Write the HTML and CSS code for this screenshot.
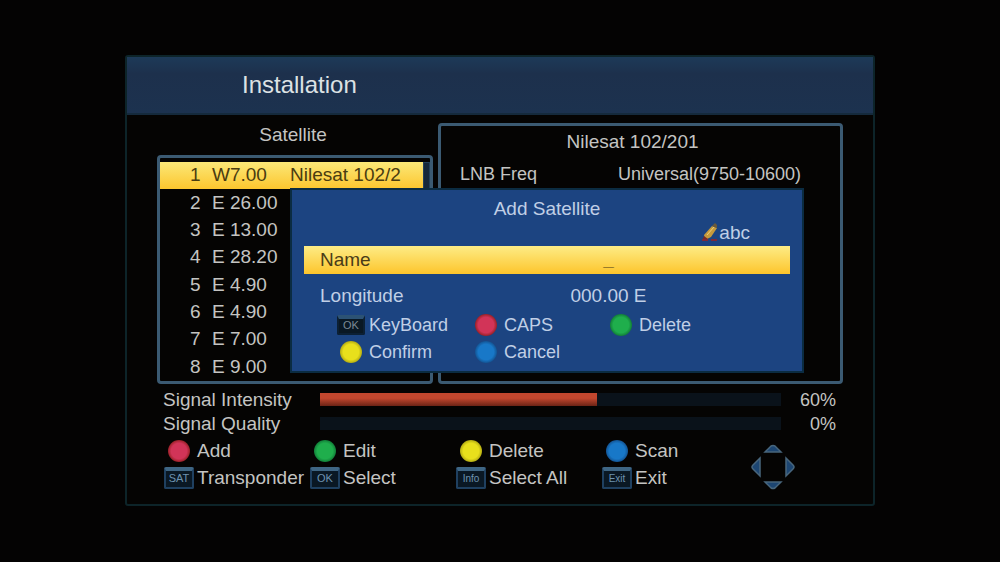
FILE: index.html
```html
<!DOCTYPE html>
<html lang="en">
<head>
    <meta charset="UTF-8">
    <title>Installation</title>
    <link rel="stylesheet" href="styles.css">
</head>
<body>
    <div class="screen">
        <div class="header">
            <h1>Installation</h1>
        </div>

        <div class="content">
            <div class="panels">
                <div class="satellites">
                    <h2>Satellite</h2>
                    <div class="list">
                        <table>
                            <tr class="selected"><td class="num">1</td><td class="pos">W7.00</td><td>Nilesat 102/2</td></tr>
                            <tr><td class="num">2</td><td class="pos">E 26.00</td><td></td></tr>
                            <tr><td class="num">3</td><td class="pos">E 13.00</td><td></td></tr>
                            <tr><td class="num">4</td><td class="pos">E 28.20</td><td></td></tr>
                            <tr><td class="num">5</td><td class="pos">E 4.90</td><td></td></tr>
                            <tr><td class="num">6</td><td class="pos">E 4.90</td><td></td></tr>
                            <tr><td class="num">7</td><td class="pos">E 7.00</td><td></td></tr>
                            <tr><td class="num">8</td><td class="pos">E 9.00</td><td></td></tr>
                        </table>
                        <div class="scrollbar"></div>
                    </div>
                </div>

                <div class="details">
                    <h2>Nilesat 102/201</h2>
                    <div class="param">
                        <span>LNB Freq</span>
                        <span>Universal(9750-10600)</span>
                    </div>
                </div>

                <!-- Add satellite dialog -->
                <form class="dialog">
                    <h2>Add Satellite</h2>
                    <div class="input-mode">
                        <svg width="18" height="20" viewBox="0 0 18 20">
                            <path d="M3 12 L11 3 L16 5 L10 14 L4 17 Z" fill="#c59a3c"/>
                            <path d="M11 3 L14 0 L16 2 L16 5 Z" fill="#6b5a3a"/>
                            <path d="M6 12 L13 4" stroke="#ecd07a" stroke-width="1"/>
                            <path d="M3 13 L7 16 L1 18 Z" fill="#7a2a22"/>
                            <path d="M1 17 H7 M10 17 H16" stroke="#7a2a3a" stroke-width="2"/>
                        </svg>
                        <span>abc</span>
                    </div>
                    <div class="field active">
                        <label for="name">Name</label>
                        <input type="text" id="name" name="name" value="_">
                    </div>
                    <div class="field">
                        <label for="longitude">Longitude</label>
                        <input type="text" id="longitude" name="longitude" value="000.00 E">
                    </div>
                    <div class="actions">
                        <button type="button"><span class="icon"><span class="key">OK</span></span>KeyBoard</button>
                        <button type="button"><span class="icon"><span class="dot red"></span></span>CAPS</button>
                        <button type="button"><span class="icon"><span class="dot green"></span></span>Delete</button>
                        <button type="button"><span class="icon"><span class="dot yellow"></span></span>Confirm</button>
                        <button type="button"><span class="icon"><span class="dot blue"></span></span>Cancel</button>
                    </div>
                </form>
            </div>

            <div class="signal">
                <label for="intensity">Signal Intensity</label>
                <progress id="intensity" max="100" value="60"></progress>
                <span class="percent">60%</span>
                <label for="quality">Signal Quality</label>
                <progress id="quality" max="100" value="0"></progress>
                <span class="percent">0%</span>
            </div>

            <div class="footer">
                <div class="keys">
                    <button type="button"><span class="icon"><span class="dot red"></span></span>Add</button>
                    <button type="button"><span class="icon"><span class="dot green"></span></span>Edit</button>
                    <button type="button"><span class="icon"><span class="dot yellow"></span></span>Delete</button>
                    <button type="button"><span class="icon"><span class="dot blue"></span></span>Scan</button>
                    <button type="button"><span class="icon"><span class="key">SAT</span></span>Transponder</button>
                    <button type="button"><span class="icon"><span class="key">OK</span></span>Select</button>
                    <button type="button"><span class="icon"><span class="key narrow">Info</span></span>Select All</button>
                    <button type="button"><span class="icon"><span class="key narrow">Exit</span></span>Exit</button>
                </div>
                <svg class="arrows" width="46" height="46" viewBox="0 0 46 46">
                    <g fill="#1d4672" stroke="#48667c" stroke-width="1.5">
                        <path d="M15 8 L21 2 Q23 1 25 2 L31 8 Z"/>
                        <path d="M15 38 L21 44 Q23 45 25 44 L31 38 Z"/>
                        <path d="M10 14 L3 21 Q1 23 3 25 L10 32 Z"/>
                        <path d="M36 14 L43 21 Q45 23 43 25 L36 32 Z"/>
                    </g>
                </svg>
            </div>
        </div>
    </div>
</body>
</html>
```
FILE: styles.css
```css
* {
    box-sizing: border-box;
}
body {
    margin: 0;
    min-height: 100vh;
    padding-bottom: 2px;
    display: flex;
    align-items: center;
    justify-content: center;
    background-color: #040303;
    color: #c4c4c2;
    font-family: "Liberation Sans", Arial, sans-serif;
    font-size: 19px;
}
h1, h2 {
    margin: 0;
    font-weight: normal;
}
h1 {
    font-size: 24px;
    line-height: 28px;
    color: #dce2e4;
}
h2 {
    font-size: 19px;
    line-height: 24px;
    text-align: center;
}
button, input {
    font-family: inherit;
    font-size: inherit;
    color: inherit;
    background: none;
    border: none;
    padding: 0;
}
.screen {
    width: 75%;
    min-width: 748px;
    border: 2px solid #0d2429;
    border-radius: 3px;
    background-color: #050403;
}
.header {
    padding: 14px 115px;
    background: linear-gradient(#1d3a58, #1d304c 30%, #1c324f);
    border-bottom: 2px solid #152a3c;
}
.content {
    padding: 8px 30px 12px;
}
.panels {
    position: relative;
    display: grid;
    grid-template-columns: minmax(0, 15fr) minmax(0, 22fr);
    gap: 5px;
}
.satellites {
    display: flex;
    flex-direction: column;
}
.satellites h2 {
    height: 32px;
    padding-right: 4px;
}
.list, .details {
    border: 3px solid #3b5a72;
    border-radius: 4px;
}
.list {
    flex: 1;
    display: flex;
    padding-top: 4px;
}
table {
    flex: 1;
    height: 219px;
    border-collapse: collapse;
    table-layout: fixed;
}
td {
    height: 27px;
    padding: 0;
    white-space: nowrap;
}
.num {
    width: 52px;
    padding-left: 30px;
}
.pos {
    width: 78px;
}
.selected {
    color: #4a3c10;
    background: linear-gradient(#fbe878, #fdc62e);
}
.scrollbar {
    width: 7px;
    margin-bottom: 30px;
    background-color: #16283a;
    border: 1px solid #24415a;
}
.details {
    padding: 4px 39px 4px 19px;
}
.details h2 {
    padding-left: 4px;
}
.param {
    display: flex;
    justify-content: space-between;
    margin-top: 8px;
    font-size: 18px;
    line-height: 24px;
}
.dialog {
    position: absolute;
    top: 65px;
    left: 133px;
    right: 39px;
    padding: 7px 12px 5px;
    border: 2px solid #0b2c42;
    background-color: #1c4481;
    color: #c0cfe6;
}
.input-mode {
    display: flex;
    align-items: center;
    justify-content: flex-end;
    height: 25px;
    padding-right: 40px;
}
.field {
    display: grid;
    grid-template-columns: 107px minmax(0, 1fr);
    align-items: center;
    height: 28px;
    margin-bottom: 8px;
    padding-left: 16px;
}
.field:not(.active) {
    margin-bottom: 2px;
}
.field input {
    width: 100%;
    text-align: center;
}
.active {
    color: #4a3c18;
    background: linear-gradient(#fdec86, #fdc52c);
}
.active input {
    font-weight: bold;
}
.actions {
    display: grid;
    grid-template-columns: repeat(3, 135px);
    padding-left: 31px;
}
.actions button, .keys button {
    display: flex;
    align-items: center;
    gap: 2px;
    height: 27px;
    white-space: nowrap;
}
.actions button {
    font-size: 18px;
}
.icon {
    display: flex;
    justify-content: center;
    width: 32px;
}
.dot {
    width: 22px;
    height: 22px;
    border-radius: 50%;
}
.red {
    background: radial-gradient(#d23458 50%, #8c1c1c 75%);
}
.green {
    background: radial-gradient(#1fae4c 50%, #0e7434 75%);
}
.yellow {
    background: radial-gradient(#e8e01c 50%, #a8a010 75%);
}
.blue {
    background: radial-gradient(#1878c8 50%, #124c88 75%);
}
.key {
    width: 30px;
    height: 22px;
    border: 2px solid #1f4060;
    border-top: 4px solid #3f6684;
    border-radius: 2px;
    background-color: #0a1824;
    color: #6d93b0;
    font-size: 11px;
    line-height: 15px;
    text-align: center;
}
.narrow {
    font-size: 10px;
}
.actions .key {
    width: 28px;
    height: 20px;
    border-color: #0c2034;
    border-top-color: #2c5274;
    color: #7c8a94;
    line-height: 13px;
}
.signal {
    display: grid;
    grid-template-columns: 157px minmax(0, 1fr) 55px;
    align-items: center;
    line-height: 24px;
    margin-top: 4px;
    padding: 0 7px 0 6px;
}
progress {
    appearance: none;
    width: 100%;
    height: 13px;
    border: none;
}
progress::-webkit-progress-bar {
    background-color: #0a121a;
}
progress::-webkit-progress-value {
    background: linear-gradient(#c2472e 40%, #6c2416);
}
.percent {
    text-align: right;
    font-size: 18px;
}
.footer {
    display: flex;
    align-items: center;
    justify-content: space-between;
    margin-top: 2px;
    padding: 0 47px 0 6px;
}
.keys {
    display: grid;
    grid-template-columns: repeat(4, 146px);
}
.arrows {
    flex: none;
    margin-top: 4px;
}
```
